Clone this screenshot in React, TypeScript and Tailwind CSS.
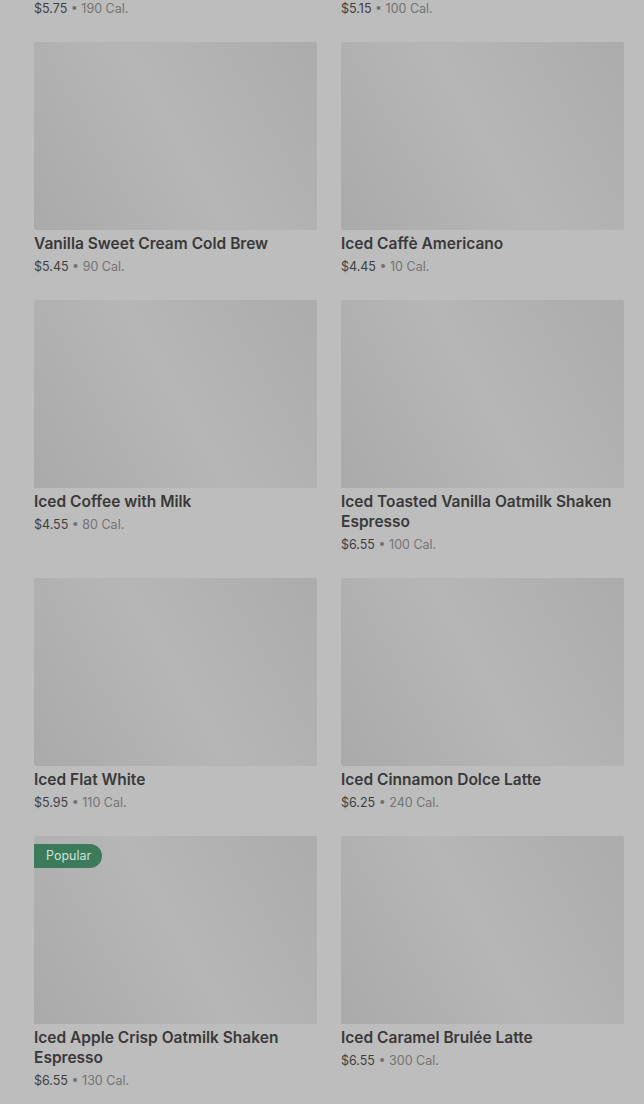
import React from "react";

type Item = {
  name: string;
  price: string;
  cal: string;
  popular?: boolean;
};

const items: Item[] = [
  { name: "Iced Caramel Macchiato", price: "$5.75", cal: "190 Cal." },
  { name: "Iced Chai Tea Latte", price: "$5.15", cal: "100 Cal." },
  { name: "Vanilla Sweet Cream Cold Brew", price: "$5.45", cal: "90 Cal." },
  { name: "Iced Caffè Americano", price: "$4.45", cal: "10 Cal." },
  { name: "Iced Coffee with Milk", price: "$4.55", cal: "80 Cal." },
  { name: "Iced Toasted Vanilla Oatmilk Shaken Espresso", price: "$6.55", cal: "100 Cal." },
  { name: "Iced Flat White", price: "$5.95", cal: "110 Cal." },
  { name: "Iced Cinnamon Dolce Latte", price: "$6.25", cal: "240 Cal." },
  { name: "Iced Apple Crisp Oatmilk Shaken Espresso", price: "$6.55", cal: "130 Cal.", popular: true },
  { name: "Iced Caramel Brulée Latte", price: "$6.55", cal: "300 Cal." },
];

const ProductCard: React.FC<{ item: Item }> = ({ item }) => (
  <div className="flex flex-col">
    <div className="relative h-[188px] w-full rounded-[2px] bg-[linear-gradient(60deg,#aaaaaa_0%,#b0b0b0_25%,#b6b6b6_50%,#b1b1b1_75%,#acacac_100%)]">
      {item.popular && (
        <span className="absolute left-0 top-2 flex h-6 items-center rounded-r-full bg-[#3b7b5c] pl-3 pr-[11px] text-[12.5px] text-[#cfe2d6]">
          Popular
        </span>
      )}
    </div>
    <div className="mt-1 text-[15.5px] font-semibold leading-5 text-[#393939]">{item.name}</div>
    <div className="mt-[3px] text-[12.5px] leading-5 text-[#3f3f3f]">
      {item.price}
      <span className="text-[#737373]"> • {item.cal}</span>
    </div>
  </div>
);

const App: React.FC = () => {
  return (
    <div className="min-h-screen w-full overflow-hidden bg-[#bdbdbd] font-['Inter',sans-serif]">
      <div className="-mt-[216px] grid grid-cols-2 gap-x-6 gap-y-[23px] pl-[34px] pr-5 pb-10">
        {items.map((item) => (
          <ProductCard key={item.name} item={item} />
        ))}
      </div>
    </div>
  );
};

export default App;
